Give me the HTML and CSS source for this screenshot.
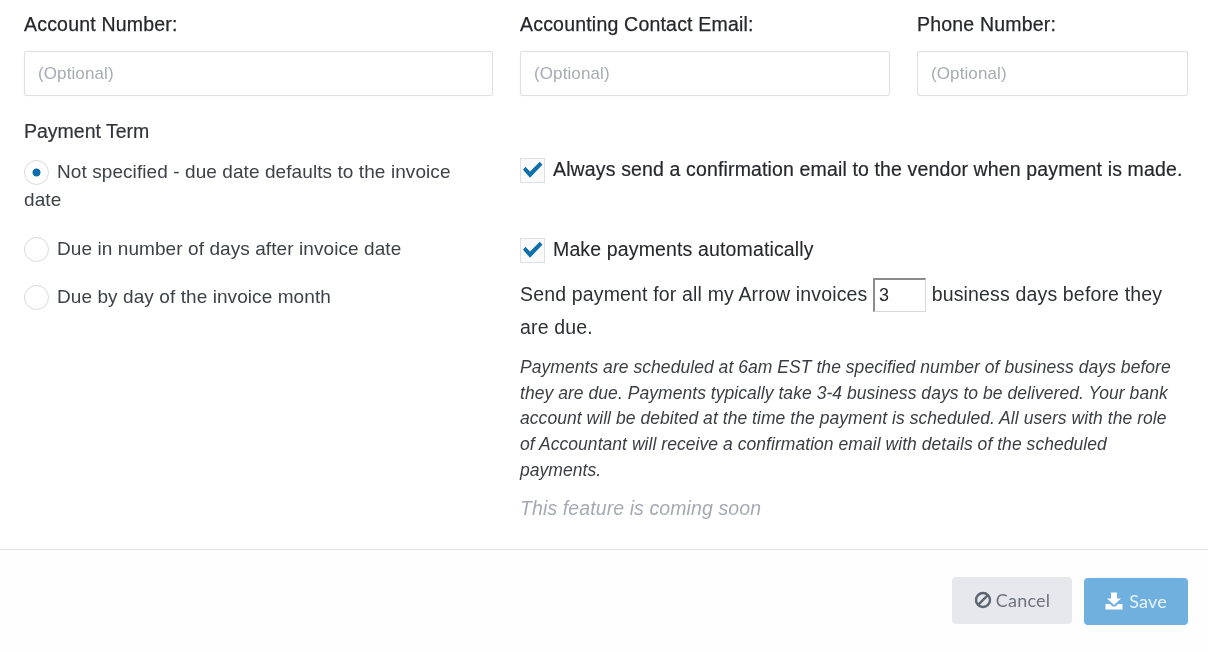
FILE: index.html
```html
<!DOCTYPE html>
<html lang="en">
<head>
<meta charset="utf-8">
<title>Vendor payment settings</title>
<link rel="stylesheet" href="styles.css">
</head>
<body>
<main class="form">
  <section class="fields">
    <div class="field">
      <label class="field-label">Account Number:</label>
      <input class="text-input" type="text" placeholder="(Optional)">
    </div>
    <div class="field">
      <label class="field-label">Accounting Contact Email:</label>
      <input class="text-input" type="text" placeholder="(Optional)">
    </div>
    <div class="field">
      <label class="field-label">Phone Number:</label>
      <input class="text-input" type="text" placeholder="(Optional)">
    </div>
  </section>
  <section class="columns">
    <div class="term">
      <div class="term-title">Payment Term</div>
      <div class="radio-row first"><span class="radio checked"></span>Not specified - due date defaults to the invoice date</div>
      <div class="radio-row"><span class="radio"></span>Due in number of days after invoice date</div>
      <div class="radio-row"><span class="radio"></span>Due by day of the invoice month</div>
    </div>
    <div class="options">
      <div class="check-row confirm">
        <span class="check"><svg viewBox="1 1 23 23" width="23" height="23"><path d="M3 11.8 L5.4 8.8 L10 13.4 L19.8 3.8 L22.4 6.8 L10 19.8 Z" fill="#0f6fae"/></svg></span>
        <span>Always send a confirmation email to the vendor when payment is made.</span>
      </div>
      <div class="check-row auto">
        <span class="check"><svg viewBox="1 1 23 23" width="23" height="23"><path d="M3 11.8 L5.4 8.8 L10 13.4 L19.8 3.8 L22.4 6.8 L10 19.8 Z" fill="#0f6fae"/></svg></span>
        <span>Make payments automatically</span>
      </div>
      <p class="send">Send payment for all my Arrow invoices <input class="days" type="text" value="3"> business days before they are due.</p>
      <p class="note">Payments are scheduled at 6am EST the specified number of business days before they are due. Payments typically take 3-4 business days to be delivered. Your bank account will be debited at the time the payment is scheduled. All users with the role of Accountant will receive a confirmation email with details of the scheduled payments.</p>
      <p class="soon">This feature is coming soon</p>
    </div>
  </section>
  <footer class="actions">
    <button class="btn cancel" type="button">
      <svg viewBox="0 0 18 18" width="18" height="18"><circle cx="9" cy="9" r="7" fill="none" stroke="#5d6472" stroke-width="2.4"/><path d="M4.6 13.4 L13.4 4.6" stroke="#5d6472" stroke-width="2.4"/></svg>
      Cancel
    </button>
    <button class="btn save" type="button">
      <svg viewBox="0 0 18 18" width="18" height="18"><path d="M6 0.5 H12 V6.5 H16 L9 13 L2 6.5 H6 Z M0.5 12 H5 L7.5 14.5 H10.5 L13 12 H17.5 V17.5 H0.5 Z" fill="#fff"/></svg>
      Save
    </button>
  </footer>
</main>
</body>
</html>
```
FILE: styles.css
```css
* { box-sizing: border-box; }
html, body { margin: 0; height: 100%; background: #fff; }
body {
  font-family: "Liberation Sans", Arial, sans-serif;
  font-size: 19px;
  letter-spacing: 0.08px;
  color: #3d4148;
  overflow: hidden;
}
.form { display: flex; flex-direction: column; filter: blur(0.6px); height: 652px; }
.fields {
  display: grid;
  grid-template-columns: 469px 370px 271px;
  column-gap: 27px;
  padding: 13px 20px 0 24px;
}
.field-label { display: block; color: #26282c; font-size: 19.5px; line-height: 22px; letter-spacing: 0.2px; -webkit-text-stroke: 0.25px #26282c; }
.text-input {
  display: block;
  width: 100%;
  height: 45px;
  margin-top: 16px;
  padding: 0 13px;
  border: 1px solid #dcdfe5;
  border-radius: 3px;
  background: #fff;
  font: 17px "Liberation Sans", Arial, sans-serif;
  letter-spacing: 0.1px;
  box-shadow: 0 0 1px #e3e5ea;
}
.text-input::placeholder { color: #a7abb3; opacity: 1; }
.columns {
  display: grid;
  grid-template-columns: 469px 668px;
  column-gap: 27px;
  padding: 23px 20px 0 24px;
}
.term-title { color: #303338; font-size: 19.5px; line-height: 24px; letter-spacing: 0; -webkit-text-stroke: 0.2px #303338; }
.radio-row { line-height: 28px; margin-top: 20.5px; }
.radio-row.first { margin-top: 15px; }
.radio {
  display: inline-block;
  width: 25px;
  height: 25px;
  margin-right: 8px;
  border: 1px solid #d5d8dd;
  border-radius: 50%;
  vertical-align: -7px;
  background: #fff;
}
.radio.checked { background: radial-gradient(circle, #0f6fae 0 3.6px, #fff 4.4px); }
.check-row { display: flex; align-items: flex-start; color: #26282c; font-size: 19.5px; line-height: 23px; letter-spacing: 0.14px; }
.confirm { margin-top: 39px; -webkit-text-stroke: 0.2px #26282c; }
.auto { margin-top: 55px; -webkit-text-stroke: 0.1px #26282c; }
.check {
  flex: none;
  display: flex;
  align-items: center;
  justify-content: center;
  width: 25px;
  height: 25px;
  margin-right: 8px;
  border: 1px solid #dcdfe3;
  background: #fafafa;
}
.send { margin: 15px 0 0; font-size: 19.5px; line-height: 31px; letter-spacing: 0.16px; color: #2d3035; }
.days {
  width: 53px;
  height: 34px;
  padding: 0 4px;
  border: 1px solid #d8d8d8;
  border-top: 2px solid #8c8c8c;
  border-left: 2px solid #8c8c8c;
  font: 18px "Liberation Sans", Arial, sans-serif;
  color: #26282c;
  vertical-align: baseline;
}
.note {
  margin: 12px 0 0;
  padding-right: 4px;
  font-size: 17.5px;
  font-style: italic;
  letter-spacing: 0.05px;
  line-height: 25.7px;
  color: #3a3d43;
}
.soon {
  margin: 12px 0 0;
  font-size: 19.5px;
  font-style: italic;
  letter-spacing: 0.1px;
  line-height: 25px;
  color: #a4a9b4;
}
.actions {
  flex: 1;
  display: flex;
  justify-content: flex-end;
  align-items: flex-start;
  gap: 12px;
  margin-top: 28px;
  padding: 27px 20px 0 0;
  border-top: 1px solid #e1e3e6;
  background: #fefefe;
}
.btn {
  display: flex;
  align-items: center;
  justify-content: center;
  gap: 4px;
  height: 47px;
  border: 0;
  border-radius: 4px;
  font: 18px "Lato", sans-serif;
  letter-spacing: 0.2px;
}
.cancel { width: 120px; background: #e6e8ed; color: #6d727d; }
.save { width: 104px; margin-top: 1px; gap: 6px; background: #6fb0df; color: #e8f3fb; }
```
